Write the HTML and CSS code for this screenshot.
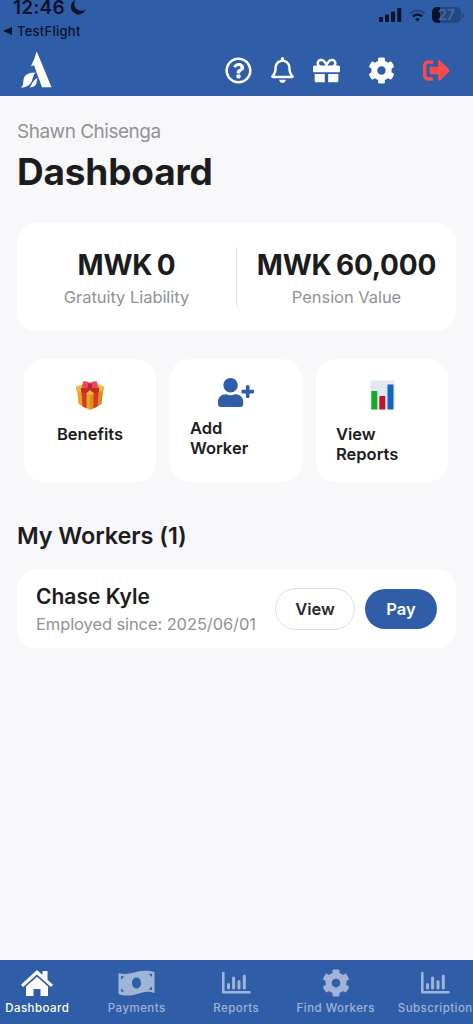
FILE: index.html
```html
<!DOCTYPE html>
<html lang="en">
<head>
<meta charset="utf-8">
<meta name="viewport" content="width=device-width, initial-scale=1">
<title>Dashboard</title>
<link rel="stylesheet" href="styles.css">
</head>
<body>
<svg class="defs" aria-hidden="true">
  <symbol id="cog" viewBox="0 0 512 512"><path d="M487.4 315.700l-42.600-24.600c4.300-23.200 4.300-47 0-70.200l42.600-24.600c4.900-2.800 7.100-8.600 5.500-14-11.100-35.600-30-67.800-54.700-94.600-3.800-4.100-10-5.100-14.800-2.300L380.800 110c-17.900-15.400-38.500-27.300-60.800-35.100V25.800c0-5.600-3.900-10.500-9.400-11.700-36.700-8.200-74.300-7.800-109.200 0-5.500 1.200-9.400 6.100-9.400 11.700V75c-22.200 7.900-42.800 19.800-60.800 35.100L88.700 85.500c-4.900-2.800-11-1.900-14.800 2.300-24.700 26.700-43.600 58.900-54.700 94.600-1.700 5.400.6 11.200 5.500 14L67.300 221c-4.300 23.200-4.300 47 0 70.200l-42.600 24.600c-4.900 2.800-7.100 8.600-5.500 14 11.100 35.600 30 67.800 54.700 94.600 3.800 4.100 10 5.100 14.800 2.300l42.600-24.600c17.900 15.400 38.500 27.300 60.800 35.100v49.200c0 5.600 3.900 10.500 9.400 11.700 36.700 8.200 74.300 7.800 109.200 0 5.500-1.200 9.400-6.100 9.400-11.700v-49.200c22.200-7.900 42.800-19.800 60.800-35.100l42.600 24.600c4.900 2.800 11 1.900 14.800-2.300 24.700-26.700 43.600-58.900 54.700-94.600 1.500-5.500-.7-11.300-5.600-14.100zM256 336c-44.100 0-80-35.900-80-80s35.900-80 80-80 80 35.900 80 80-35.900 80-80 80z"/></symbol>
  <symbol id="chart" viewBox="0 0 30 24"><path d="M2.300 2V21.200H28.500" fill="none" stroke="currentColor" stroke-width="2.600" stroke-linecap="round" stroke-linejoin="round"/><path d="M7.500 17V13.500M12.600 17V7M18 17V10.500M23.300 17V5" fill="none" stroke="currentColor" stroke-width="3" stroke-linecap="round"/></symbol>
</svg>

<header class="header">
  <div class="status">
    <div class="status-left">
      <div class="clock">12:46
        <svg class="moon" viewBox="0 0 16 16"><path d="M5.500.8A7.600 7.600 0 1 0 15.700 10.200 7 7 0 0 1 5.500.8z"/></svg>
      </div>
      <div class="back"><svg viewBox="0 0 9 8"><path d="M0 4L9 0V8z"/></svg>TestFlight</div>
    </div>
    <div class="status-right">
      <svg class="signal" viewBox="0 0 23 14"><rect x="0" y="9" width="4" height="5" rx="1"/><rect x="6" y="6.500" width="4" height="7.500" rx="1"/><rect x="12" y="3.500" width="4" height="10.500" rx="1"/><rect x="18.300" y="0" width="4" height="14" rx="1"/></svg>
      <svg class="wifi" viewBox="0 0 18 14" fill="none" stroke-width="2.400"><path class="wifi-faint" d="M1.200 5A11.200 11.200 0 0 1 16.800 5"/><path class="wifi-arc" d="M4 8A7.200 7.200 0 0 1 14 8"/><path class="wifi-dot" d="M6.500 10.800L9 13.400l2.500-2.600A3.600 3.600 0 0 0 6.500 10.800z"/></svg>
      <div class="battery"><span>27</span></div>
      <i class="battery-tip"></i>
    </div>
  </div>
  <div class="toolbar">
    <svg class="logo" viewBox="60 153 96 112"><path d="M110 154L155 263H126L102 196L93 199C97 190 104 177 110 154z"/><path d="M63 264C70 257 69 246 71 236C75 222 91 217 107 219C98 226 99 239 93 249C87 259 76 263 63 264z"/><path d="M88 263C96 257 96 243 113 235C109 242 112 250 107 256C103 261 96 263 88 263z"/></svg>
    <nav class="actions">
      <svg class="a-help" viewBox="0 0 512 512"><path d="M256 8C119.043 8 8 119.083 8 256c0 136.997 111.043 248 248 248s248-111.003 248-248C504 119.083 392.957 8 256 8zm0 448c-110.532 0-200-89.431-200-200 0-110.495 89.472-200 200-200 110.491 0 200 89.471 200 200 0 110.530-89.431 200-200 200zm107.244-255.200c0 67.052-72.421 68.084-72.421 92.863V300c0 6.627-5.373 12-12 12h-45.647c-6.627 0-12-5.373-12-12v-8.659c0-35.745 27.100-50.034 47.579-61.516 17.561-9.845 28.324-16.541 28.324-29.579 0-17.246-21.999-28.693-39.784-28.693-23.189 0-33.894 10.977-48.942 29.969-4.057 5.120-11.460 6.071-16.666 2.124l-27.824-21.098c-5.107-3.872-6.251-11.066-2.644-16.363C184.846 131.491 214.940 112 261.794 112c49.071 0 101.450 38.304 101.450 88.800zM298 368c0 23.159-18.841 42-42 42s-42-18.841-42-42 18.841-42 42-42 42 18.841 42 42z"/></svg>
      <svg class="a-bell" viewBox="0 0 448 512"><path d="M439.390 362.290c-19.320-20.760-55.470-51.990-55.470-154.290 0-77.700-54.480-139.900-127.940-155.160V32c0-17.670-14.320-32-31.980-32s-31.980 14.330-31.980 32v20.840C118.560 68.100 64.080 130.300 64.080 208c0 102.300-36.150 133.530-55.470 154.290-6 6.450-8.660 14.160-8.610 21.710.11 16.400 12.980 32 32.100 32h383.800c19.120 0 32-15.600 32.100-32 .05-7.550-2.610-15.270-8.610-21.710zM67.530 368c21.220-27.970 44.420-74.330 44.530-159.420 0-.2-.06-.38-.06-.58 0-61.860 50.140-112 112-112s112 50.140 112 112c0 .2-.06.38-.06.58.11 85.100 23.310 131.460 44.530 159.420H67.530zM224 512c35.320 0 63.970-28.650 63.970-64H160.030c0 35.350 28.650 64 63.970 64z"/></svg>
      <svg class="a-gift" viewBox="0 0 512 512"><path d="M32 448c0 17.700 14.300 32 32 32h160V320H32v128zm256 32h160c17.700 0 32-14.300 32-32V320H288v160zm192-320h-42.100c6.200-12.100 10.100-25.500 10.100-40 0-48.500-39.500-88-88-88-41.600 0-68.500 21.300-103 68.300-34.500-47-61.400-68.300-103-68.300-48.500 0-88 39.500-88 88 0 14.500 3.800 27.900 10.100 40H32c-17.700 0-32 14.300-32 32v80c0 8.800 7.200 16 16 16h480c8.800 0 16-7.200 16-16v-80c0-17.700-14.300-32-32-32zm-326.100 0c-22.100 0-40-17.900-40-40s17.900-40 40-40c19.900 0 34.600 3.300 86.100 80h-86.100zm206.100 0h-86.100c51.400-76.500 65.700-80 86.100-80 22.100 0 40 17.900 40 40s-17.900 40-40 40z"/></svg>
      <svg class="a-cog"><use href="#cog"/></svg>
      <svg class="a-exit" viewBox="0 0 512 512"><path d="M497 273L329 441c-15 15-41 4.500-41-17v-96H152c-13.300 0-24-10.700-24-24v-96c0-13.300 10.700-24 24-24h136V88c0-21.400 25.900-32 41-17l168 168c9.300 9.400 9.300 24.600 0 34zM192 436v-40c0-6.600-5.400-12-12-12H96c-17.700 0-32-14.300-32-32V160c0-17.700 14.300-32 32-32h84c6.600 0 12-5.400 12-12V76c0-6.600-5.400-12-12-12H96c-53 0-96 43-96 96v192c0 53 43 96 96 96h84c6.600 0 12-5.400 12-12z"/></svg>
    </nav>
  </div>
</header>

<main class="main">
  <p class="user">Shawn Chisenga</p>
  <h1 class="title">Dashboard</h1>

  <section class="summary">
    <div class="stat"><b>MWK 0</b><span>Gratuity Liability</span></div>
    <div class="stat"><b>MWK 60,000</b><span>Pension Value</span></div>
  </section>

  <section class="tiles">
    <div class="tile">
      <svg class="present" viewBox="0 0 30 30"><path fill="#e8a323" d="M2 9l13 5 13-5-1.500 15L15 30 3.500 24z"/><path fill="#d98f1b" d="M15 14l13-5-1.500 15L15 30z"/><path fill="#f1b83b" d="M1 6.500L15 2l14 4.500v4L15 15 1 10.500z"/><path fill="#d9352b" d="M6.500 11.500l5 2V28.500l-4-2zM23.500 11.500l-5 2V28.500l4-2z"/><path fill="#c52b27" d="M6 8l9-4 9 4v4l-5 1.600L15 10l-4 3.600L6 12z"/><path fill="#e9495a" d="M8 1.500Q12 .3 15 3.500Q18 .3 22 1.500L23 8Q18 9 15 6.500Q12 9 7 8z"/><path fill="#b82539" d="M13 3.500h4v4h-4z"/></svg>
      <span>Benefits</span>
    </div>
    <div class="tile tile-add">
      <svg class="add" viewBox="0 0 640 512"><path d="M624 208h-64v-64c0-8.800-7.200-16-16-16h-32c-8.800 0-16 7.200-16 16v64h-64c-8.800 0-16 7.200-16 16v32c0 8.800 7.200 16 16 16h64v64c0 8.800 7.200 16 16 16h32c8.800 0 16-7.200 16-16v-64h64c8.800 0 16-7.200 16-16v-32c0-8.800-7.200-16-16-16zm-400 48c70.700 0 128-57.300 128-128S294.700 0 224 0 96 57.300 96 128s57.300 128 128 128zm89.600 32h-16.700c-22.200 10.200-46.900 16-72.900 16s-50.600-5.800-72.900-16h-16.700C60.200 288 0 348.200 0 422.400V464c0 26.500 21.500 48 48 48h352c26.500 0 48-21.500 48-48v-41.600c0-74.200-60.200-134.400-134.400-134.400z"/></svg>
      <span>Add<br>Worker</span>
    </div>
    <div class="tile">
      <svg class="bars" viewBox="0 0 25 30"><path fill="#e1e9f4" d="M.5.5h24v29H.5z"/><path d="M.5 7.500h24M.5 15h24M.5 22.500h24M8.500.5v29M16.500.5v29" stroke="#d6e0ee" stroke-width=".5"/><path fill="#18a92f" d="M1.300 11h6v18.500h-6z"/><path fill="#c01526" d="M9.300 16h6v13.500h-6z"/><path fill="#1763c0" d="M17.500 4.500h6v25h-6z"/></svg>
      <span>View<br>Reports</span>
    </div>
  </section>

  <h2 class="section-title">My Workers (1)</h2>
  <section class="worker">
    <div class="worker-info"><b>Chase Kyle</b><span>Employed since: 2025/06/01</span></div>
    <button class="btn btn-view">View</button>
    <button class="btn btn-pay">Pay</button>
  </section>
</main>

<nav class="tabs">
  <a class="tab active"><svg viewBox="0 0 32 26"><path d="M16 0L21.500 5V1h5v8.700L32 14.700l-2 2.300L16 4.500 2 17 0 14.700z"/><path d="M16 6.700L27 16.500V26h-7.500v-7h-7v7H5V16.500z"/></svg><span>Dashboard</span></a>
  <a class="tab"><svg class="cash" viewBox="0 0 37 26"><path fill-rule="evenodd" d="M.5 3C7 5 12 3.500 18 2S31 0 36.500 2V23C30 20.500 25 22 19 24S6 26 .5 24zM18.500 7.500c-2.700 0-4.500 2.400-4.500 5.500s1.800 5.500 4.500 5.500S23 16.100 23 13s-1.800-5.500-4.500-5.500zM3 6v3.500L6.500 6.500zM34 4l-3.500-.3L34 7zM3 21.500l3.500.3L3 18.500zM34 20v-3.500L30.500 19.500z"/></svg><span>Payments</span></a>
  <a class="tab"><svg class="chart"><use href="#chart"/></svg><span>Reports</span></a>
  <a class="tab"><svg class="gear"><use href="#cog"/></svg><span>Find Workers</span></a>
  <a class="tab"><svg class="chart"><use href="#chart"/></svg><span>Subscription</span></a>
</nav>
</body>
</html>
```
FILE: styles.css
```css
* { box-sizing: border-box; }
body {
  margin: 0;
  height: 1024px;
  overflow: hidden;
  display: flex;
  flex-direction: column;
  background: #f8f8fb;
  color: #1c1c1e;
  font-family: Inter, "Liberation Sans", sans-serif;
}
svg { display: block; flex: none; fill: currentColor; }
.defs { position: absolute; width: 0; height: 0; }
p, h1, h2 { margin: 0; }

.header { height: 96px; background: #305da8; color: #fff; flex: none; }
.status { display: flex; justify-content: space-between; height: 42px; color: #07132b; }
.clock {
  display: flex; align-items: center; gap: 5px;
  height: 15px; margin: 0 0 0 13px;
  font-size: 19px; font-weight: 600; line-height: 15px; letter-spacing: .2px;
}
.moon { width: 16px; height: 16px; margin-top: -2px; }
.back {
  display: flex; align-items: center; gap: 5px;
  margin: 8px 0 0 3px;
  font-size: 13px; font-weight: 500; line-height: 16px; letter-spacing: .25px;
}
.back svg { width: 9px; height: 8px; }
.status-right { display: flex; align-items: center; height: 30px; padding-right: 9px; }
.signal { width: 23px; height: 14px; margin-right: 7px; }
.wifi { width: 17px; height: 13px; stroke: currentColor; margin-right: 6px; }
.wifi-faint { fill: none; opacity: .3; }
.wifi-arc { fill: none; }
.wifi-dot { fill: currentColor; stroke: none; }
.battery {
  width: 29px; height: 16px; border-radius: 5px;
  background: linear-gradient(90deg, #07132b 27%, #244783 27%);
  color: #4a6a9f; font-size: 14px; font-weight: 600; line-height: 16px; text-align: center;
}
.battery-tip { width: 2px; height: 5px; margin-left: 1px; border-radius: 0 2px 2px 0; background: #244783; }

.toolbar { display: flex; justify-content: space-between; height: 54px; padding: 0 23px 0 20px; }
.logo { width: 32px; height: 37px; margin-top: 9px; }
.actions { display: flex; align-items: center; height: 56px; }
.a-help { width: 27px; height: 27px; margin-right: 19px; }
.a-bell { width: 23px; height: 26px; margin-right: 19px; }
.a-gift { width: 27px; height: 27px; margin-right: 28px; }
.a-cog { width: 27px; height: 27px; margin-right: 28px; }
.a-exit { width: 27px; height: 27px; color: #fb4a4c; }

.main { flex: 1; padding: 24px 17px 0; }
.user { color: #929295; font-size: 19px; line-height: 24px; letter-spacing: -.5px; }
.title { margin-top: 5px; font-size: 37px; line-height: 46px; font-weight: 700; letter-spacing: -.2px; }

.summary { display: flex; height: 108px; margin-top: 28px; padding: 24px 0; border-radius: 20px; background: #fff; }
.stat { flex: 1; display: flex; flex-direction: column; align-items: center; height: 60px; }
.stat + .stat { border-left: 1px solid #e4e4e8; }
.stat b { padding-top: 1px; font-size: 28px; line-height: 34px; letter-spacing: -.2px; word-spacing: -2px; }
.stat span { margin-top: 5px; color: #929295; font-size: 16.500px; line-height: 20px; letter-spacing: -.05px; }

.tiles { display: flex; gap: 14px; margin-top: 28px; padding: 0 8px 0 7px; }
.tile {
  flex: 1; display: flex; flex-direction: column; align-items: center;
  height: 123px; padding: 21px 20px 0; border-radius: 20px; background: #fff;
}
.tile span { font-size: 16.500px; line-height: 20px; font-weight: 600; }
.tile:last-child span, .tile-add span { align-self: flex-start; }
.present { width: 30px; height: 30px; margin-bottom: 14px; }
.bars { width: 25px; height: 30px; margin-bottom: 14px; }
.tile-add { padding-top: 19px; }
.add { width: 36px; height: 29px; margin-bottom: 11px; color: #305da8; }

.section-title { margin-top: 39px; font-size: 23.500px; line-height: 30px; font-weight: 600; letter-spacing: -.1px; }
.worker { display: flex; align-items: center; height: 79px; margin-top: 18px; padding: 0 19px; border-radius: 20px; background: #fff; }
.worker-info { display: flex; flex-direction: column; margin-right: auto; white-space: nowrap; }
.worker-info b { padding-top: 1px; font-size: 21px; line-height: 26px; font-weight: 600; }
.worker-info span { margin-top: 4px; color: #929295; font-size: 16.500px; line-height: 20px; letter-spacing: -.1px; }
.btn { font: 600 16.500px/20px Inter, "Liberation Sans", sans-serif; padding: 0; border: 0; border-radius: 21px; }
.btn-view { width: 80px; height: 42px; border: 1px solid #dedee1; background: #fff; color: #2b2b2e; }
.btn-pay { width: 72px; height: 40px; margin-left: 10px; background: #305da8; color: #fff; }

.tabs { display: flex; flex: none; height: 64px; margin: 0 -12px 0 -12.500px; background: #305da8; }
.tab { flex: 1; display: flex; flex-direction: column; align-items: center; color: #a0b4d8; }
.tab svg { width: 32px; height: 26px; margin-top: 10px; }
.tab span { margin-top: 5px; font-size: 11.500px; line-height: 15px; font-weight: 500; letter-spacing: .45px; white-space: nowrap; }
.tab .cash { width: 37px; }
.tab .chart { width: 30px; height: 24px; margin: 11px 0 1px; }
.tab .gear { width: 28px; height: 28px; margin: 9px 0 -1px; }
.tab.active { color: #fff; }
```
